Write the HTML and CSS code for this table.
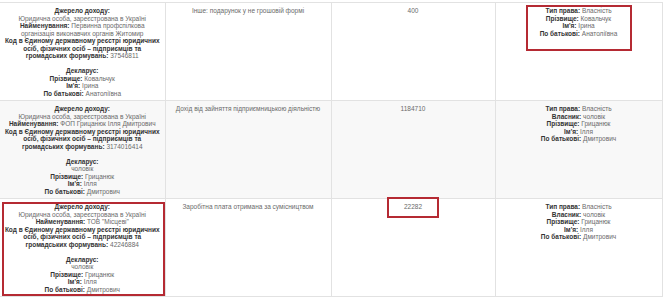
FILE: index.html
```html
<!DOCTYPE html>
<html lang="uk">
<head>
<meta charset="utf-8">
<link rel="stylesheet" href="styles.css">
</head>
<body>
<table class="decl">
  <colgroup>
    <col class="c1"><col class="c2"><col class="c3"><col class="c4">
  </colgroup>
  <tr class="row">
    <td class="cell">
      <b>Джерело доходу:</b><br>
      <span class="v">Юридична особа, зареєстрована в Україні</span><br>
      <b>Найменування:</b> <span class="v">Первинна профспілкова</span><br>
      <span class="v">організація виконавчих органів Житомир</span><br>
      <b>Код в Єдиному державному реєстрі юридичних</b><br>
      <b>осіб, фізичних осіб – підприємців та</b><br>
      <b>громадських формувань:</b> <span class="v">37546811</span><br><br>
      <b>Декларус:</b><br>
      <b>Прізвище:</b> <span class="v">Ковальчук</span><br>
      <b>Ім'я:</b> <span class="v">Ірина</span><br>
      <b>По батькові:</b> <span class="v">Анатоліївна</span>
    </td>
    <td class="cell v">Інше: подарунок у не грошовій формі</td>
    <td class="cell v">400</td>
    <td class="cell">
      <span class="mark mark-a"></span>
      <b>Тип права:</b> <span class="v">Власність</span><br>
      <b>Прізвище:</b> <span class="v">Ковальчук</span><br>
      <b>Ім'я:</b> <span class="v">Ірина</span><br>
      <b>По батькові:</b> <span class="v">Анатоліївна</span>
    </td>
  </tr>
  <tr class="row alt">
    <td class="cell">
      <b>Джерело доходу:</b><br>
      <span class="v">Юридична особа, зареєстрована в Україні</span><br>
      <b>Найменування:</b> <span class="v">ФОП Грицанюк Ілля Дмитрович</span><br>
      <b>Код в Єдиному державному реєстрі юридичних</b><br>
      <b>осіб, фізичних осіб – підприємців та</b><br>
      <b>громадських формувань:</b> <span class="v">3174016414</span><br><br>
      <b>Декларус:</b><br>
      <span class="v">чоловік</span><br>
      <b>Прізвище:</b> <span class="v">Грицанюк</span><br>
      <b>Ім'я:</b> <span class="v">Ілля</span><br>
      <b>По батькові:</b> <span class="v">Дмитрович</span>
    </td>
    <td class="cell v">Дохід від зайняття підприємницькою діяльністю</td>
    <td class="cell v">1184710</td>
    <td class="cell">
      <b>Тип права:</b> <span class="v">Власність</span><br>
      <b>Власник:</b> <span class="v">чоловік</span><br>
      <b>Прізвище:</b> <span class="v">Грицанюк</span><br>
      <b>Ім'я:</b> <span class="v">Ілля</span><br>
      <b>По батькові:</b> <span class="v">Дмитрович</span>
    </td>
  </tr>
  <tr class="row">
    <td class="cell">
      <span class="mark mark-b"></span>
      <b>Джерело доходу:</b><br>
      <span class="v">Юридична особа, зареєстрована в Україні</span><br>
      <b>Найменування:</b> <span class="v">ТОВ "Місцеві"</span><br>
      <b>Код в Єдиному державному реєстрі юридичних</b><br>
      <b>осіб, фізичних осіб – підприємців та</b><br>
      <b>громадських формувань:</b> <span class="v">42246884</span><br><br>
      <b>Декларус:</b><br>
      <span class="v">чоловік</span><br>
      <b>Прізвище:</b> <span class="v">Грицанюк</span><br>
      <b>Ім'я:</b> <span class="v">Ілля</span><br>
      <b>По батькові:</b> <span class="v">Дмитрович</span>
    </td>
    <td class="cell v">Заробітна плата отримана за сумісництвом</td>
    <td class="cell v">
      <span class="mark mark-c"></span>
      22282
    </td>
    <td class="cell">
      <b>Тип права:</b> <span class="v">Власність</span><br>
      <b>Власник:</b> <span class="v">чоловік</span><br>
      <b>Прізвище:</b> <span class="v">Грицанюк</span><br>
      <b>Ім'я:</b> <span class="v">Ілля</span><br>
      <b>По батькові:</b> <span class="v">Дмитрович</span>
    </td>
  </tr>
</table>
</body>
</html>
```

FILE: styles.css
```css
html, body {
  margin: 0;
  padding: 0;
  background: #ffffff;
}
body {
  padding-top: 2px;
  font-family: "Liberation Sans", Arial, sans-serif;
  font-size: 6.5px;
  line-height: 7.55px;
  color: #333333;
}
.decl {
  border-collapse: collapse;
  table-layout: fixed;
  width: 662px;
}
.c1 { width: 165px; }
.c2 { width: 166px; }
.c3 { width: 164px; }
.c4 { width: 167px; }
.row {
  height: 98px;
}
.alt {
  background: #f8f8f8;
}
.cell {
  position: relative;
  vertical-align: top;
  text-align: center;
  padding: 4px 3px 1px;
  border: 1px solid #e2e2e2;
}
.cell:first-child {
  border-left: none;
}
b {
  font-weight: bold;
  color: #333333;
}
.v {
  color: #6a6a6a;
}
.mark {
  position: absolute;
  border: 2.5px solid #b52a33;
  box-sizing: border-box;
}
.mark-a {
  left: 30px;
  top: 2px;
  width: 106px;
  height: 46px;
}
.mark-b {
  left: 2px;
  top: 3px;
  width: 163px;
  height: 94px;
}
.mark-c {
  left: 55px;
  top: -2px;
  width: 52px;
  height: 21px;
}
```
